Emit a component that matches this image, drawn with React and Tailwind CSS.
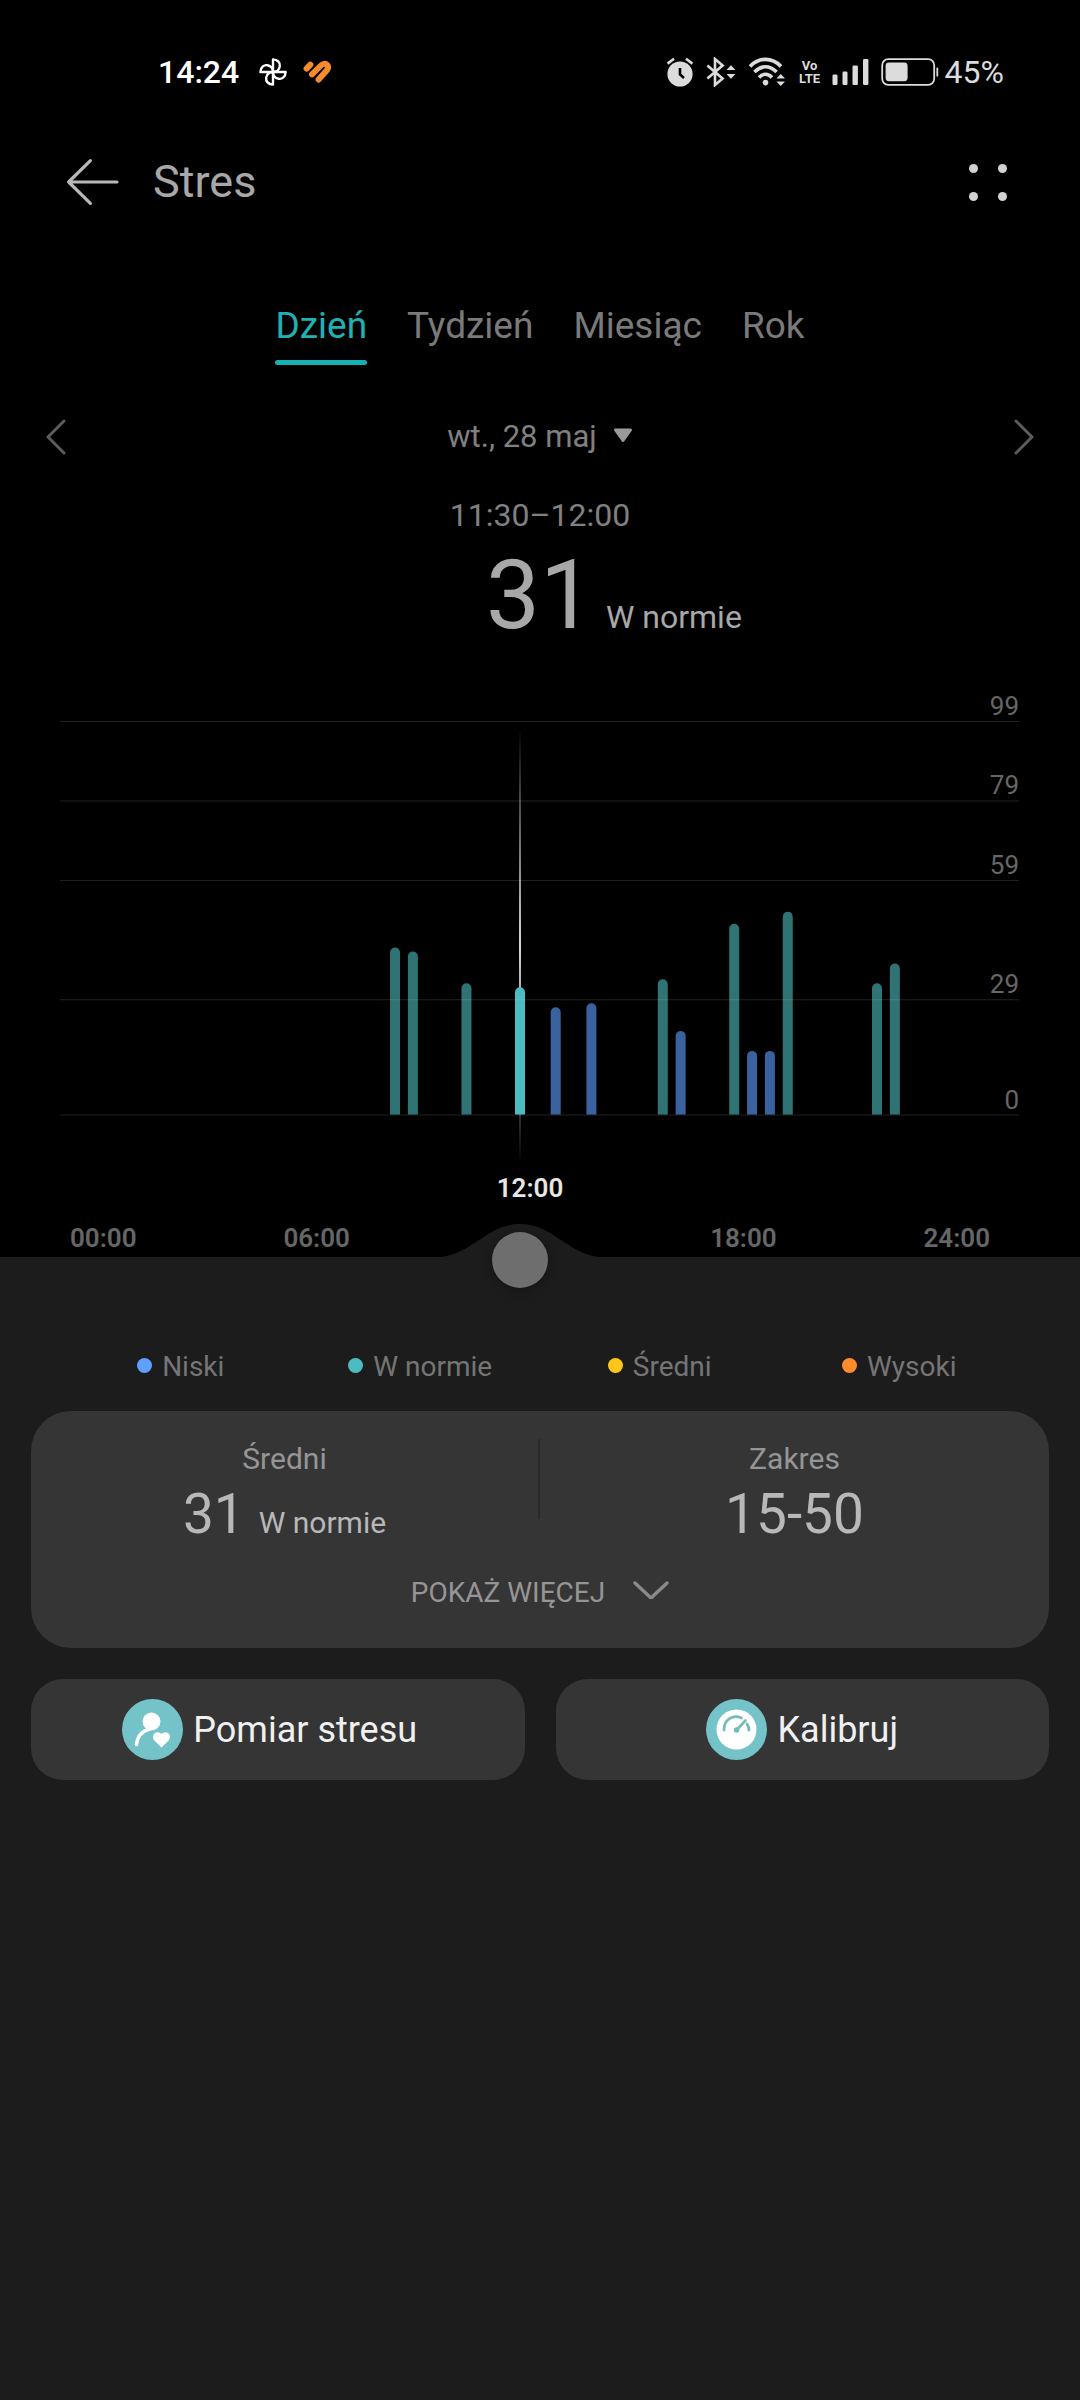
import { useState } from 'react';
import clsx from 'clsx';

const COLORS = {
  low: '#3a629e',
  normal: '#2f7375',
  lowActive: '#5f9fff',
  normalActive: '#4abcc2',
};

const TABS = ['Dzień', 'Tydzień', 'Miesiąc', 'Rok'];

// slot = half-hour index of the day (23 => 11:30–12:00)
const READINGS = [
  { slot: 16, value: 41 },
  { slot: 17, value: 40 },
  { slot: 20, value: 32 },
  { slot: 23, value: 31 },
  { slot: 25, value: 26 },
  { slot: 27, value: 27 },
  { slot: 31, value: 33 },
  { slot: 32, value: 20 },
  { slot: 35, value: 47 },
  { slot: 36, value: 15 },
  { slot: 37, value: 15 },
  { slot: 38, value: 50 },
  { slot: 43, value: 32 },
  { slot: 44, value: 37 },
];

const GRID = [99, 79, 59, 29, 0];
const HOURS = ['00:00', '06:00', '12:00', '18:00', '24:00'];

const LEGEND = [
  { label: 'Niski', dot: 'bg-[#5f9fff]' },
  { label: 'W normie', dot: 'bg-[#4abcc2]' },
  { label: 'Średni', dot: 'bg-[#ffc61a]' },
  { label: 'Wysoki', dot: 'bg-[#ff8b2b]' },
];

const slotX = (slot) => 520 + (slot - 23) * 17.85;
const valueY = (value) => 454.5 - value * 3.975;

const barColor = (value, active) => {
  if (value < 30) return active ? COLORS.lowActive : COLORS.low;
  return active ? COLORS.normalActive : COLORS.normal;
};

const StatusBar = () => (
  <div className="flex h-36 items-center pl-[158px] pr-[76px] text-[32px] leading-10 text-[#dcdcdc]">
    <span className="font-medium text-white">14:24</span>
    <svg className="ml-5 h-7 w-7" viewBox="0 0 28 28" fill="none" stroke="#fff" strokeWidth="2.4" strokeLinejoin="round">
      {[0, 90, 180, 270].map((a) => (
        <path key={a} d="M14 14V1.4C18.8 1.4 21.4 5 20.8 8.4C20.2 11.8 17.6 14 14 14Z" transform={`rotate(${a} 14 14)`} />
      ))}
    </svg>
    <svg className="ml-4 h-7 w-7" viewBox="0 0 28 28" fill="none" stroke="#f68b2c" strokeWidth="6" strokeLinecap="round" strokeLinejoin="round">
      <path d="M3.6 10.6L7.4 6.6" />
      <path d="M9 16.4L17.4 8C19.8 5.6 22.4 5.2 24 6.8C25.6 8.6 25 11 23.2 13L15.6 21.6" />
    </svg>

    <div className="ml-auto flex items-center">
      {/* alarm */}
      <svg className="h-[30px] w-7" viewBox="0 0 28 30" fill="none">
        <circle cx="14" cy="17" r="12.6" fill="#dcdcdc" />
        <path d="M1.6 6.6L8 1.8M26.4 6.6L20 1.8" stroke="#dcdcdc" strokeWidth="2.6" />
        <path d="M14 11V17.4L18 21" stroke="#000" strokeWidth="2.6" />
      </svg>
      {/* bluetooth */}
      <svg className="ml-3 h-[30px] w-[30px]" viewBox="0 0 30 30" fill="none">
        <path d="M1.4 8.4L16.6 21.6L9 28V2L16.6 8.4L1.4 21.6" stroke="#dcdcdc" strokeWidth="2.6" />
        <path d="M20.5 13L25 8.2L29.5 13ZM20.5 17L25 21.8L29.5 17Z" fill="#dcdcdc" />
      </svg>
      {/* wifi */}
      <svg className="ml-3 h-[30px] w-[38px]" viewBox="0 0 38 30" fill="none">
        <path d="M2 9.4C11 0 24 0 33 9.4M6.4 15C13.4 8 21.6 8 28.6 15M11 20.4C15 16.4 20 16.4 24 20.4" stroke="#dcdcdc" strokeWidth="3.6" />
        <circle cx="17.5" cy="25.6" r="2.8" fill="#dcdcdc" />
        <path d="M28.5 21.4L32.8 17L37 21.4ZM28.5 24.6L32.8 29L37 24.6Z" fill="#dcdcdc" />
      </svg>
      <span className="ml-3 flex w-6 flex-col items-center text-[13px] font-bold leading-[13px]">
        <span>Vo</span>
        <span>LTE</span>
      </span>
      {/* signal */}
      <svg className="ml-[10px] h-[26px] w-[37px]" viewBox="0 0 37 26" fill="#dcdcdc">
        <rect x="0.5" y="15.5" width="5" height="10.5" rx="1.2" />
        <rect x="10.5" y="12.5" width="5" height="13.5" rx="1.2" />
        <rect x="20.5" y="6.5" width="5.4" height="19.5" rx="1.2" />
        <rect x="31" y="0" width="5.4" height="26" rx="1.2" />
      </svg>
      {/* battery */}
      <svg className="ml-3 h-7 w-[58px]" viewBox="0 0 58 28" fill="none">
        <rect x="1.2" y="1.2" width="52" height="25.6" rx="6" stroke="#dcdcdc" strokeWidth="1.8" />
        <rect x="4.6" y="4.6" width="22" height="18.6" rx="3.4" fill="#dcdcdc" />
        <rect x="55.4" y="9.6" width="1.8" height="9" rx="0.9" fill="#dcdcdc" />
      </svg>
      <span className="ml-[6px]">45%</span>
    </div>
  </div>
);

const Header = () => (
  <header className="flex h-[76px] items-center pl-[66px] pr-[73px]">
    <button type="button" aria-label="Wstecz">
      <svg className="h-12 w-[54px]" viewBox="0 0 54 48" fill="none" stroke="#b8b8b8" strokeWidth="3.2" strokeLinecap="round" strokeLinejoin="round">
        <path d="M51 24H2.6M24.4 2.6L2.6 24L24.4 45.4" />
      </svg>
    </button>
    <h1 className="ml-[33px] text-[45px] leading-[56px] text-[#a8a8a8]">Stres</h1>
    <button type="button" aria-label="Menu" className="ml-auto grid grid-cols-2 gap-x-5 gap-y-[19px]">
      {[0, 1, 2, 3].map((i) => (
        <span key={i} className="h-[9px] w-[9px] rounded-full bg-[#d2d2d2]" />
      ))}
    </button>
  </header>
);

const Chevron = ({ d, className }) => (
  <svg className={className} viewBox="0 0 20 36" fill="none" stroke="#5c5c5c" strokeWidth="3" strokeLinecap="round" strokeLinejoin="round">
    <path d={d} />
  </svg>
);

const StressChart = ({ selected }) => (
  <svg className="block w-full" viewBox="0 0 1080 512" role="img" aria-label="Stres">
    <defs>
      <linearGradient id="cursor" x1="0" y1="0" x2="0" y2="1">
        <stop offset="0" stopColor="#fff" stopOpacity="0" />
        <stop offset="0.5" stopColor="#fff" stopOpacity="0.85" />
        <stop offset="1" stopColor="#fff" stopOpacity="0" />
      </linearGradient>
    </defs>
    <rect x={slotX(selected) - 1} y="67" width="2" height="438" fill="url(#cursor)" />
    {READINGS.map(({ slot, value }) => {
      const x = slotX(slot) - 5;
      const y = valueY(value + 1);
      return (
        <path
          key={slot}
          d={`M${x} 454.5V${y + 5}a5 5 0 0 1 10 0V454.5Z`}
          fill={barColor(value, slot === selected)}
        />
      );
    })}
    {GRID.map((value) => (
      <g key={value}>
        <rect x="60" y={valueY(value)} width="959" height="1" fill="#fff" fillOpacity="0.13" />
        <text x="1019" y={valueY(value) - 6} textAnchor="end" fontSize="26" fill="#666">
          {value}
        </text>
      </g>
    ))}
  </svg>
);

export default function App() {
  const [tab, setTab] = useState('Dzień');
  const [slot, setSlot] = useState(23);

  return (
    <div className="flex min-h-screen flex-col bg-black font-['Roboto',sans-serif]">
      <StatusBar />
      <Header />

      <nav className="mt-[84px] flex justify-center gap-10">
        {TABS.map((name) => (
          <button
            key={name}
            type="button"
            onClick={() => setTab(name)}
            className={clsx('flex flex-col gap-3 text-[37px] leading-[44px]', name === tab ? 'text-[#1fb2b5]' : 'text-[#7a7a7a]')}
          >
            {name}
            <span className={clsx('h-[5px] w-full rounded-full', name === tab && 'bg-[#14b0b4]')} />
          </button>
        ))}
      </nav>

      <div className="mt-[50px] flex h-11 items-center justify-between px-[46px]">
        <button type="button" aria-label="Poprzedni dzień">
          <Chevron className="h-9 w-5" d="M18 2L2 18L18 34" />
        </button>
        <button type="button" className="flex items-center gap-4 text-[31px] leading-10 text-[#808080]">
          wt., 28 maj
          <svg className="mb-1 h-[15px] w-5" viewBox="0 0 20 15" fill="#9a9a9a" stroke="#9a9a9a" strokeWidth="3" strokeLinejoin="round">
            <path d="M2.5 2H17.5L10 12.5Z" />
          </svg>
        </button>
        <button type="button" aria-label="Następny dzień">
          <Chevron className="h-9 w-5" d="M2 2L18 18L2 34" />
        </button>
      </div>

      <p className="mt-9 text-center text-[32px] leading-10 text-[#808080]">11:30–12:00</p>
      <div className="mt-5 grid grid-cols-[1fr_auto_1fr] items-baseline gap-3 text-[#a8a8a8]">
        <span className="col-start-2 text-[96px] leading-[80px]">31</span>
        <span className="text-[32px] leading-10">W normie</span>
      </div>

      <div className="mt-[23px]">
        <StressChart selected={slot} />
      </div>
      <div className="flex items-end justify-between pb-[3px] pl-[70px] pr-[90px] text-[26px] font-semibold leading-8 text-[#666]">
        {HOURS.map((hour) => (
          <span key={hour} className={clsx(hour === '12:00' && 'mb-[50px] text-[#e6e6e6]')}>
            {hour}
          </span>
        ))}
      </div>

      <main className="relative flex-1 bg-[#1c1c1c] px-[31px] pt-[90px]">
        {/* bump that follows the slider thumb */}
        <svg
          className="absolute -top-[33px] h-[34px] w-[162px] -translate-x-1/2"
          style={{ left: `${(slotX(slot) / 1080) * 100}%` }}
          viewBox="0 0 162 34"
          fill="#1c1c1c"
        >
          <path d="M3 33C35 28 49 0 81 0S127 28 159 33V34H3Z" />
        </svg>
        <input
          type="range"
          aria-label="Godzina"
          min="0"
          max="47"
          value={slot}
          onChange={(e) => setSlot(Number(e.target.value))}
          className="absolute -top-[25px] left-[7.5%] h-14 w-[83%] appearance-none bg-transparent [&::-webkit-slider-thumb]:h-14 [&::-webkit-slider-thumb]:w-14 [&::-webkit-slider-thumb]:appearance-none [&::-webkit-slider-thumb]:rounded-full [&::-webkit-slider-thumb]:bg-[#6e6e6e] [&::-webkit-slider-thumb]:shadow-[0_2px_10px_rgba(0,0,0,0.35)]"
        />

        <ul className="grid grid-cols-4 px-[30px] text-[28px] leading-10 text-[#757575]">
          {LEGEND.map(({ label, dot }) => (
            <li key={label} className="flex items-center justify-center gap-[10px]">
              <span className={clsx('mb-1 h-[15px] w-[15px] rounded-full', dot)} />
              {label}
            </li>
          ))}
        </ul>

        <section className="mt-6 h-[237px] rounded-[40px] bg-[#353535] pt-7 text-[#b8b8b8]">
          <div className="grid grid-cols-2 text-center">
            <div className="border-r-2 border-[#2a2a2a] h-20">
              <p className="text-[30px] leading-10 text-[#959595]">Średni</p>
              <p className="flex items-baseline justify-center gap-[14px] text-[55px] leading-[70px]">
                31 <span className="text-[30px]">W normie</span>
              </p>
            </div>
            <div>
              <p className="text-[30px] leading-10 text-[#959595]">Zakres</p>
              <p className="text-[55px] leading-[70px]">15-50</p>
            </div>
          </div>
          <button type="button" className="mx-auto mt-6 flex items-center gap-7 text-[28px] leading-10 text-[#959595]">
            POKAŻ WIĘCEJ
            <svg className="mb-1 h-5 w-9" viewBox="0 0 36 20" fill="none" stroke="#8a8a8a" strokeWidth="3.4" strokeLinecap="round" strokeLinejoin="round">
              <path d="M2 2L16.4 15.6Q18 17 19.6 15.6L34 2" />
            </svg>
          </button>
        </section>

        <div className="mt-[31px] grid grid-cols-2 gap-[31px] text-[36px] leading-[44px] text-[#f0f0f0]">
          <button type="button" className="flex h-[101px] items-center justify-center gap-[10px] rounded-[32px] bg-[#353535] pr-4">
            <svg className="h-[61px] w-[61px]" viewBox="0 0 61 61">
              <circle cx="30.5" cy="30.5" r="30.5" fill="#74c3c9" />
              <circle cx="29.5" cy="22.5" r="9" fill="#fff" />
              <path d="M14.5 45.5C15.5 37 19.5 32 28 30" fill="none" stroke="#fff" strokeWidth="3.4" strokeLinecap="round" />
              <path d="M39.5 48.5L32.4 41.4C28.4 37 33.6 30 39.5 34.8C45.4 30 50.6 37 46.6 41.4Z" fill="#fff" />
            </svg>
            Pomiar stresu
          </button>
          <button type="button" className="flex h-[101px] items-center justify-center gap-[10px] rounded-[32px] bg-[#353535]">
            <svg className="h-[61px] w-[61px]" viewBox="0 0 61 61">
              <circle cx="30.5" cy="30.5" r="30.5" fill="#74c3c9" />
              <circle cx="30.5" cy="30.5" r="20" fill="#fff" />
              <g fill="none" stroke="#74bcb8" strokeWidth="2.8" strokeLinecap="round">
                <path d="M18 31C18 19.5 28 15.5 35.4 19M41 25C42.4 27 43 29 43 31" />
                <path d="M31 30.5L39.4 21.6" />
              </g>
              <circle cx="30.6" cy="31" r="2.8" fill="#74bcb8" />
            </svg>
            Kalibruj
          </button>
        </div>
      </main>
    </div>
  );
}
